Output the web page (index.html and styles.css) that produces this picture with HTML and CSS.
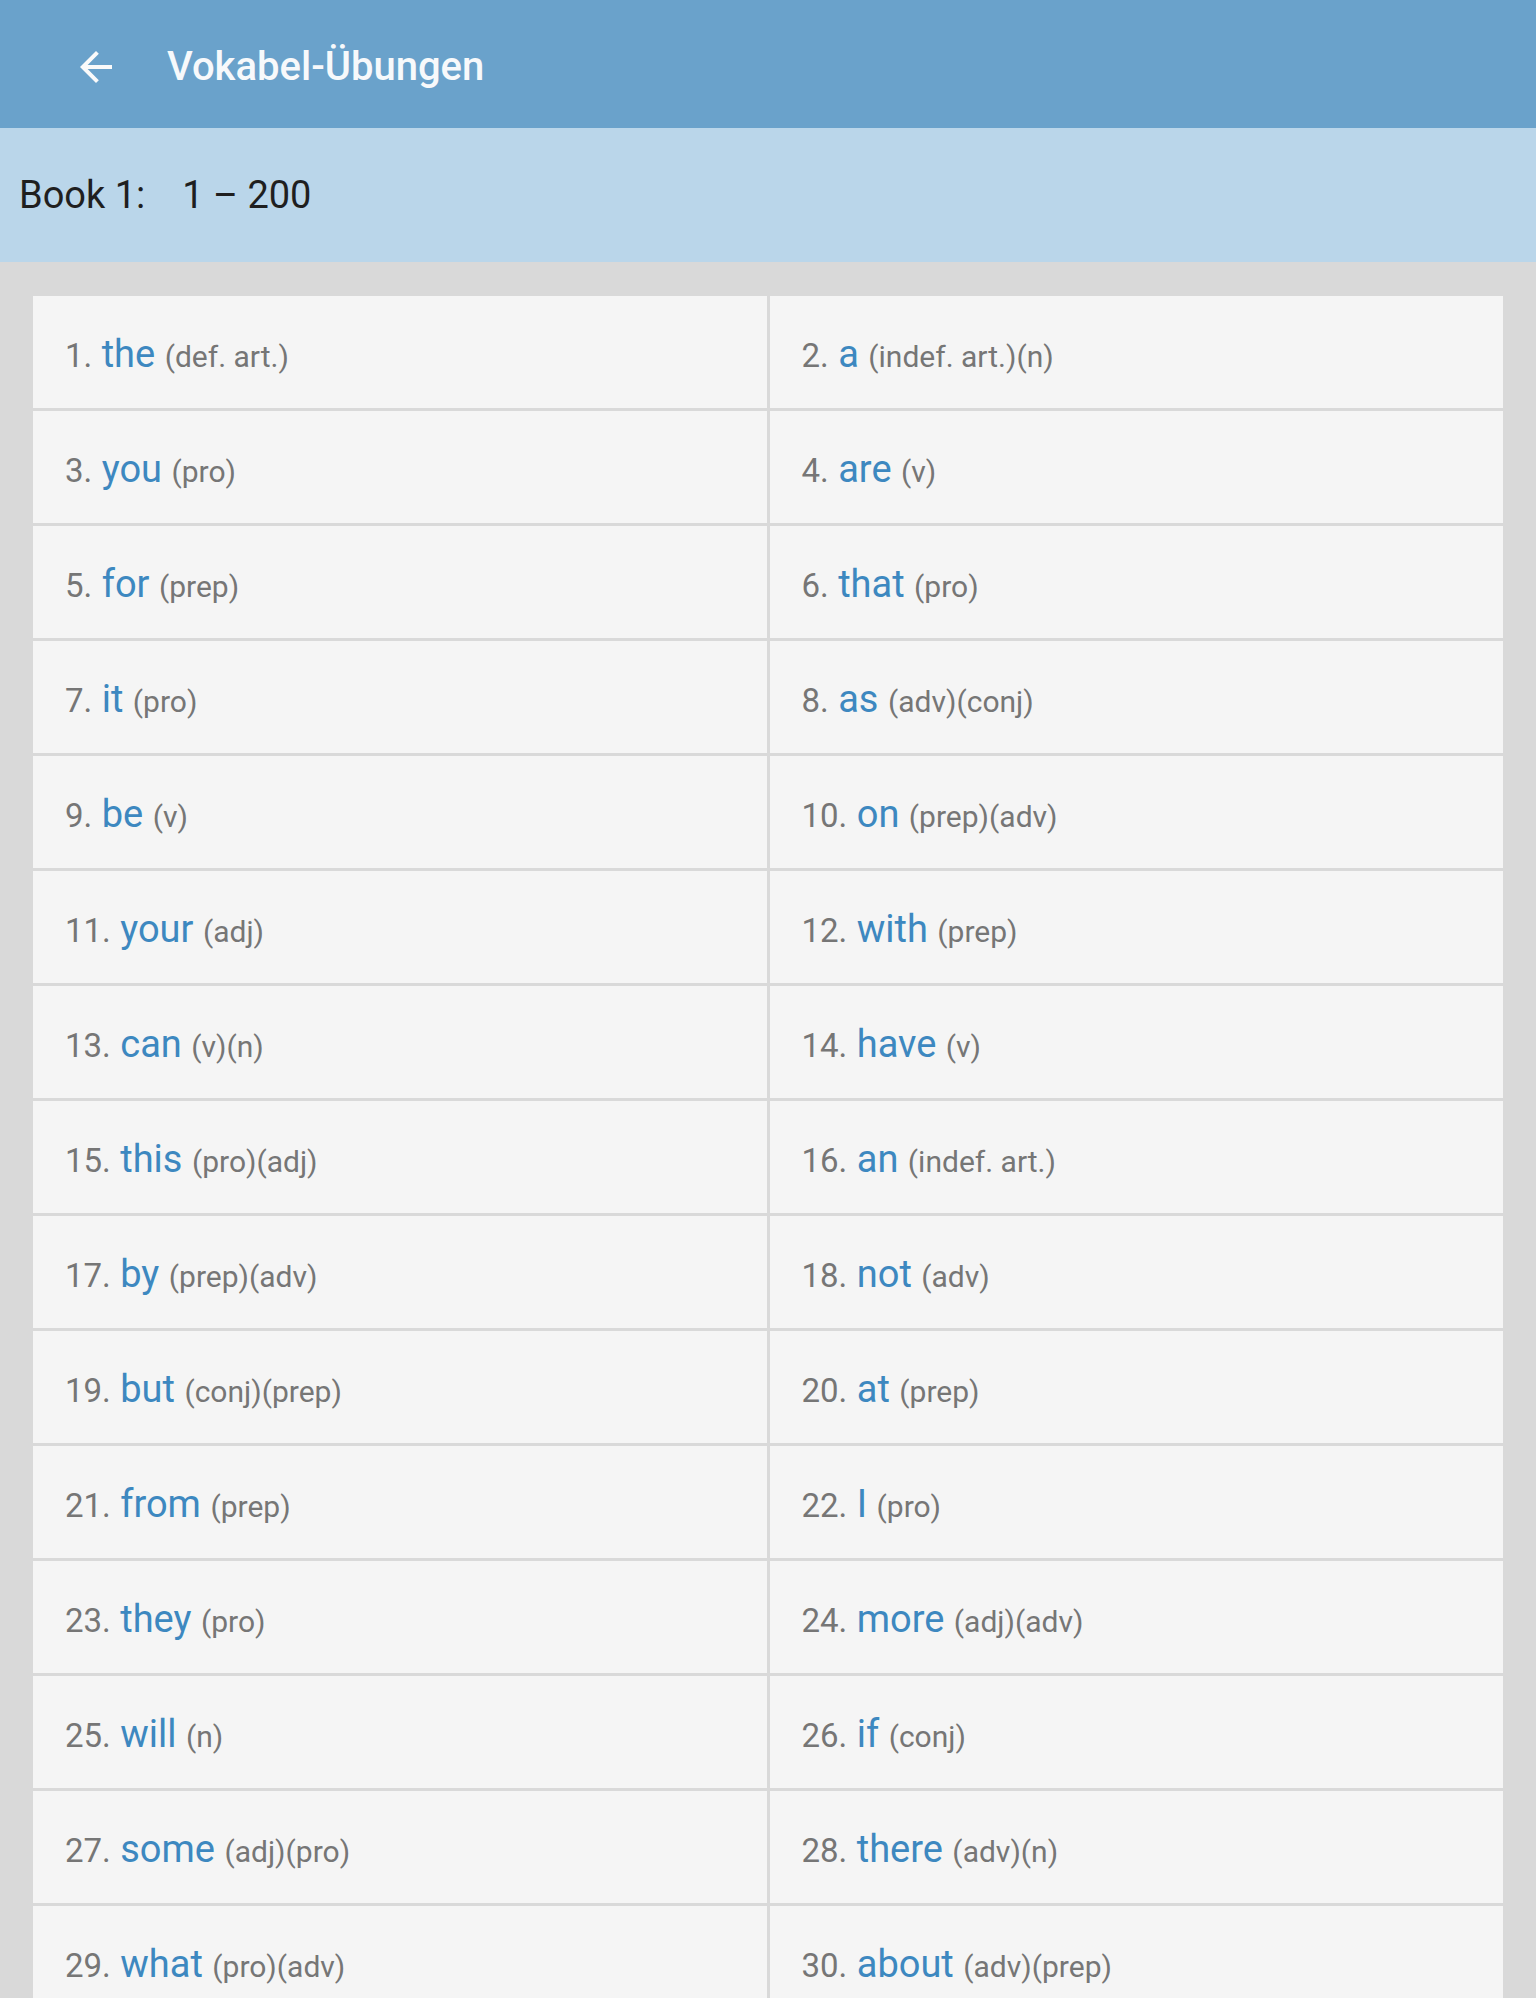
FILE: index.html
```html
<!DOCTYPE html>
<html lang="de">
<head>
<meta charset="utf-8">
<title>Vokabel-Übungen</title>
<link rel="stylesheet" href="styles.css">
</head>
<body>
<header class="appbar">
  <span class="back">
    <svg viewBox="0 0 24 24" width="48" height="48"><path fill="#fafafa" d="M20 11H7.83l5.59-5.59L12 4l-8 8 8 8 1.41-1.41L7.83 13H20v-2z"/></svg>
  </span>
  <h1 class="title">Vokabel-Übungen</h1>
</header>
<div class="subbar"><span class="book">Book 1:</span><span class="range">1 – 200</span></div>
<main class="content">
  <div class="grid">
    <div class="cell"><span class="num">1.</span> <span class="word">the</span> <span class="pos">(def. art.)</span></div>
    <div class="cell"><span class="num">2.</span> <span class="word">a</span> <span class="pos">(indef. art.)(n)</span></div>
    <div class="cell"><span class="num">3.</span> <span class="word">you</span> <span class="pos">(pro)</span></div>
    <div class="cell"><span class="num">4.</span> <span class="word">are</span> <span class="pos">(v)</span></div>
    <div class="cell"><span class="num">5.</span> <span class="word">for</span> <span class="pos">(prep)</span></div>
    <div class="cell"><span class="num">6.</span> <span class="word">that</span> <span class="pos">(pro)</span></div>
    <div class="cell"><span class="num">7.</span> <span class="word">it</span> <span class="pos">(pro)</span></div>
    <div class="cell"><span class="num">8.</span> <span class="word">as</span> <span class="pos">(adv)(conj)</span></div>
    <div class="cell"><span class="num">9.</span> <span class="word">be</span> <span class="pos">(v)</span></div>
    <div class="cell"><span class="num">10.</span> <span class="word">on</span> <span class="pos">(prep)(adv)</span></div>
    <div class="cell"><span class="num">11.</span> <span class="word">your</span> <span class="pos">(adj)</span></div>
    <div class="cell"><span class="num">12.</span> <span class="word">with</span> <span class="pos">(prep)</span></div>
    <div class="cell"><span class="num">13.</span> <span class="word">can</span> <span class="pos">(v)(n)</span></div>
    <div class="cell"><span class="num">14.</span> <span class="word">have</span> <span class="pos">(v)</span></div>
    <div class="cell"><span class="num">15.</span> <span class="word">this</span> <span class="pos">(pro)(adj)</span></div>
    <div class="cell"><span class="num">16.</span> <span class="word">an</span> <span class="pos">(indef. art.)</span></div>
    <div class="cell"><span class="num">17.</span> <span class="word">by</span> <span class="pos">(prep)(adv)</span></div>
    <div class="cell"><span class="num">18.</span> <span class="word">not</span> <span class="pos">(adv)</span></div>
    <div class="cell"><span class="num">19.</span> <span class="word">but</span> <span class="pos">(conj)(prep)</span></div>
    <div class="cell"><span class="num">20.</span> <span class="word">at</span> <span class="pos">(prep)</span></div>
    <div class="cell"><span class="num">21.</span> <span class="word">from</span> <span class="pos">(prep)</span></div>
    <div class="cell"><span class="num">22.</span> <span class="word">I</span> <span class="pos">(pro)</span></div>
    <div class="cell"><span class="num">23.</span> <span class="word">they</span> <span class="pos">(pro)</span></div>
    <div class="cell"><span class="num">24.</span> <span class="word">more</span> <span class="pos">(adj)(adv)</span></div>
    <div class="cell"><span class="num">25.</span> <span class="word">will</span> <span class="pos">(n)</span></div>
    <div class="cell"><span class="num">26.</span> <span class="word">if</span> <span class="pos">(conj)</span></div>
    <div class="cell"><span class="num">27.</span> <span class="word">some</span> <span class="pos">(adj)(pro)</span></div>
    <div class="cell"><span class="num">28.</span> <span class="word">there</span> <span class="pos">(adv)(n)</span></div>
    <div class="cell"><span class="num">29.</span> <span class="word">what</span> <span class="pos">(pro)(adv)</span></div>
    <div class="cell"><span class="num">30.</span> <span class="word">about</span> <span class="pos">(adv)(prep)</span></div>
  </div>
</main>
</body>
</html>
```
FILE: styles.css
```css
html, body {
  margin: 0;
  padding: 0;
}
body {
  font-family: Roboto, "Noto Sans", "Liberation Sans", sans-serif;
  background: #d9d9d9;
}
.appbar {
  height: 128px;
  background: #6aa2cb;
  display: flex;
  align-items: center;
  box-sizing: border-box;
  padding: 5px 0 0 72px;
}
.back {
  display: flex;
  width: 48px;
  height: 48px;
}
.title {
  margin: 0 0 0 47px;
  font-size: 40px;
  font-weight: 500;
  color: #f7f9fb;
  line-height: 1;
}
.subbar {
  height: 134px;
  background: #bad6ea;
  display: flex;
  align-items: center;
  padding-left: 19px;
  font-size: 38px;
  color: #1f1f1f;
}
.range {
  margin-left: 37px;
}
.content {
  padding: 34px 33px 40px;
}
.grid {
  display: grid;
  grid-template-columns: 1fr 1fr;
  gap: 3px;
  background: #d9d9d9;
}
.cell {
  background: #f5f5f5;
  height: 112px;
  box-sizing: border-box;
  padding: 4px 0 0 32px;
  line-height: 108px;
  font-size: 38px;
  white-space: nowrap;
  overflow: hidden;
}
.num {
  font-size: 33px;
  color: #767676;
}
.word {
  font-size: 38px;
  color: #3d88c0;
}
.pos {
  font-size: 30px;
  color: #767676;
}
```
